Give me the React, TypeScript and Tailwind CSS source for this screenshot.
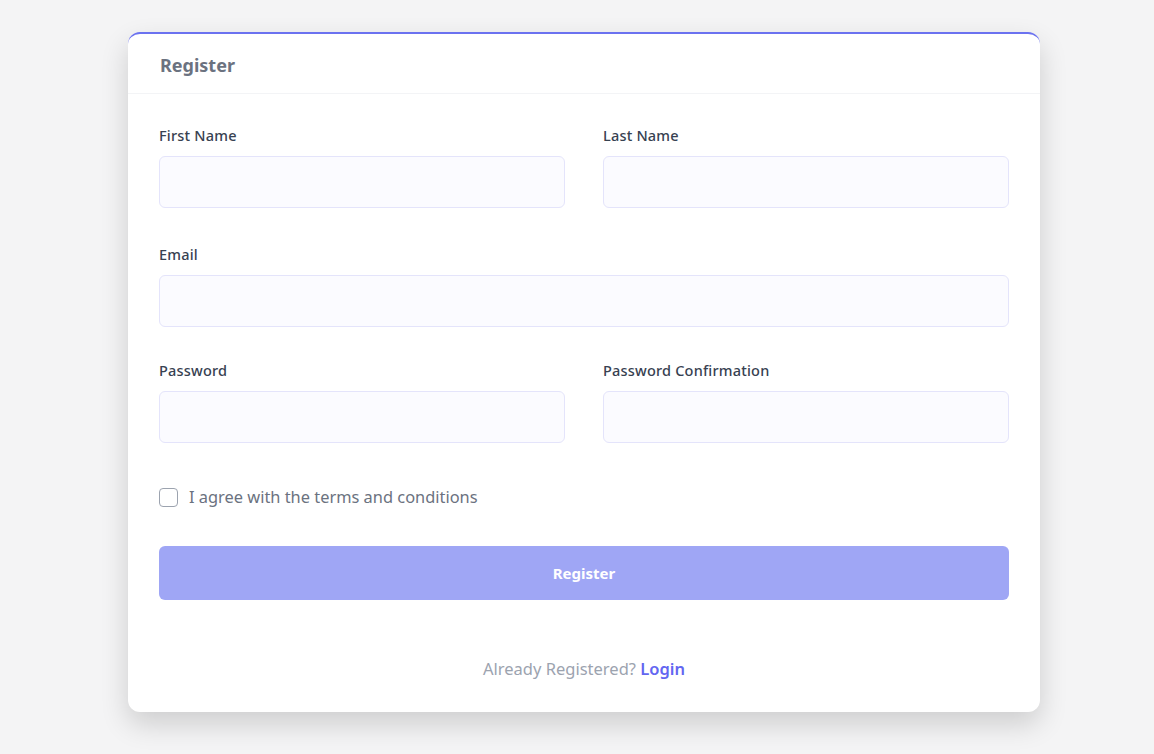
import React from "react";

const Field = ({ label, className = "" }: { label: string; className?: string }) => {
  return (
    <div className={className}>
      <label className="block text-[14.5px] leading-5 font-medium text-[#374151] tracking-[0.2px]">{label}</label>
      <input
        type="text"
        className="mt-[11px] block w-full h-[52px] rounded-md border border-[#e4e4fb] bg-[#fbfbff] px-3 outline-none"
      />
    </div>
  );
};

export default function App() {
  return (
    <div
      className="min-h-screen w-full bg-[#f4f4f5] pt-8 pb-10"
      style={{ fontFamily: '"Noto Sans", "Open Sans", sans-serif' }}
    >
      <div className="ml-[128px] w-[912px] rounded-xl border-t-2 border-[#6b72f0] bg-white shadow-[0_12px_28px_rgba(0,0,0,0.16)]">
        <div className="h-[60px] border-b border-[#f3f4f6] px-8 pt-1 flex items-center">
          <h1 className="text-[18px] font-bold text-[#6b7280]">Register</h1>
        </div>

        <form className="px-[31px] pt-[31px] pb-[31px]" onSubmit={(e) => e.preventDefault()}>
          <div className="grid grid-cols-2 gap-x-[38px]">
            <Field label="First Name" />
            <Field label="Last Name" />
          </div>

          <Field label="Email" className="mt-[36px]" />

          <div className="mt-[33px] grid grid-cols-2 gap-x-[38px]">
            <Field label="Password" />
            <Field label="Password Confirmation" />
          </div>

          <label className="mt-[42px] flex items-center gap-[11px]">
            <span className="h-[19px] w-[19px] rounded-[4px] border border-[#9ca3af] bg-white" />
            <span className="text-[16.4px] leading-6 text-[#6b7280]">I agree with the terms and conditions</span>
          </label>

          <button
            type="submit"
            className="mt-[37px] h-[54px] w-full rounded-md bg-[#9fa6f5] text-[15px] font-bold text-white"
          >
            Register
          </button>

          <p className="mt-[57px] text-center text-[16.5px] leading-6 text-[#9ca3af]">
            Already Registered? <a className="font-semibold text-[#6366f1]">Login</a>
          </p>
        </form>
      </div>
    </div>
  );
}
